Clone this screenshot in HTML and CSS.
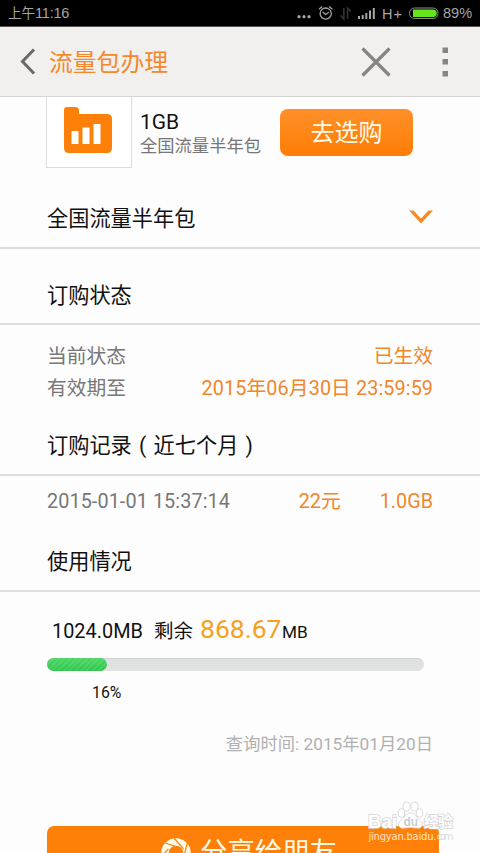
FILE: index.html
```html
<!DOCTYPE html>
<html lang="zh-CN">
<head>
<meta charset="utf-8">
<title>流量包办理</title>
<link rel="stylesheet" href="styles.css">
</head>
<body>
<div class="status">
  <span class="clock">上午<b>11:16</b></span>
  <svg class="status-icons" width="146" height="26" viewBox="296 0 146 26">
    <g fill="#a6a6a6"><circle cx="299" cy="16.7" r="1.6"/><circle cx="304" cy="16.7" r="1.6"/><circle cx="309" cy="16.7" r="1.6"/></g>
    <g fill="none" stroke="#a6a6a6" stroke-width="1.3"><circle cx="325.7" cy="13.6" r="5.6"/><path d="M322.6 12l3 2.5 3.3-2.3M319 9.2l3.2-2.6M332.4 9.2l-3.2-2.6"/></g>
    <path d="M343.8 8v11l-3.2-3.6M347.6 19V8l3.2 3.6" fill="none" stroke="#333" stroke-width="1.6"/>
    <path d="M358 16h2v3h-2zM361.7 15h2v4h-2zM365.3 13h2v6h-2zM369 10.5h2v8.500h-2zM372.800 8h2v11h-2z" fill="#a6a6a6"/>
    <text x="382" y="18.500" class="net" textLength="20">H+</text>
    <rect x="409.500" y="8" width="28.500" height="10.500" rx="5" fill="none" stroke="#8c8c8c"/>
    <path d="M413 9.500h20a3.700 3.700 0 0 1 0 7.500h-20z" fill="#63e61e"/>
  </svg>
  <span class="percent">89%</span>
</div>
<header class="header">
  <svg width="16" height="28" viewBox="0 0 16 28"><path d="M14 1.500L2.500 13.500 14 25.500" fill="none" stroke="#696969" stroke-width="3"/></svg>
  <h1>流量包办理</h1>
  <svg class="close" width="30" height="30" viewBox="0 0 30 30"><path d="M1.500 1.500l27 27M28.500 1.500l-27 27" stroke="#858585" stroke-width="3.200"/></svg>
  <svg width="6" height="30" viewBox="0 0 6 30"><path d="M.5 .5H6V6H.5zM.5 12H6v5.500H.5zM.5 24H6v5.500H.5z" fill="#858585"/></svg>
</header>
<main>
  <section class="product">
    <div class="thumb">
      <svg width="50" height="47" viewBox="0 0 50 47">
        <path d="M4 0h8q4 0 4 4v3h28q5 0 5 5v29q0 5-5 5H6q-5 0-5-5V3q0-3 3-3z" fill="#ff8008"/>
        <path d="M8.500 24h7v13h-7zM19.500 20.500h7V37h-7zM30.500 17h7v20h-7z" fill="#fff"/>
      </svg>
    </div>
    <div class="plan"><div class="size">1GB</div><div class="name">全国流量半年包</div></div>
    <div class="buy">去选购</div>
  </section>
  <h2 class="toggle"><span>全国流量半年包</span><svg width="24" height="14" viewBox="0 0 24 14"><path d="M0 .5h4.500L12 8.500l7.500-8H24L12 13.500z" fill="#f68b25"/></svg></h2>
  <h2 class="state">订购状态</h2>
  <div class="details">
    <div class="row"><span>当前状态</span><span class="hot">已生效</span></div>
    <div class="row"><span>有效期至</span><span class="hot expiry">2015年06月30日 23:59:59</span></div>
  </div>
  <h2 class="history">订购记录<i>(</i>近七个月<i>)</i></h2>
  <div class="record"><span class="when">2015-01-01 15:37:14</span><span class="hot price">22元</span><span class="hot">1.0GB</span></div>
  <h2 class="usage">使用情况</h2>
  <div class="amount"><span class="total">1024.0MB</span><span class="left">剩余</span><span class="remain">868.67</span><span class="unit">MB</span></div>
  <div class="bar"><div class="fill" style="width:16%"></div></div>
  <div class="used">16%</div>
  <div class="query">查询时间: 2015年01月20日</div>
  <div class="share">
    <svg width="30" height="30" viewBox="0 0 30 30"><circle cx="15" cy="15" r="11" fill="none" stroke="#fffbe8" stroke-width="7.500"/><path d="M15 8.500L4 5M22.500 11L13 0M23 18l3.500-14M7.500 11L0 19M8 20l4 9" stroke="#ff8008" stroke-width="1.200"/></svg>
    <span>分享给朋友</span>
  </div>
</main>
<svg class="watermark" width="90" height="46" viewBox="366 798 90 46">
  <text x="368" y="828" textLength="29" lengthAdjust="spacingAndGlyphs" class="brand">Bai</text>
  <text x="424" y="827" textLength="29" class="cn">经验</text>
  <g fill="#fff" stroke="#dadada" stroke-width="1"><ellipse cx="401.500" cy="813" rx="3.300" ry="4.200"/><ellipse cx="406.500" cy="806.500" rx="3.500" ry="4.500"/><ellipse cx="414.500" cy="806.500" rx="3.500" ry="4.500"/><ellipse cx="419.500" cy="813" rx="3.300" ry="4.200"/><path d="M410.500 813c5 0 6 5 10 8 4 4 1 8-4 7q-6-1-12 0c-6 1-8-4-4-7 4-3 5-8 10-8z"/></g>
  <text x="403.500" y="826" class="du">du</text>
  <text x="368.500" y="839.500" class="site" textLength="68">jingyan.baidu.</text>
  <text x="437" y="839.500" class="site tail" textLength="16.500">com</text>
</svg>
</body>
</html>
```
FILE: styles.css
```css
* { box-sizing: border-box; }
body {
  margin: 0;
  height: 853px;
  overflow: hidden;
  position: relative;
  background: #fdfdfd;
  color: #111;
  font-family: Roboto, "Noto Sans CJK SC", sans-serif;
}
h1, h2 { margin: 0; font-weight: 400; }
svg { display: block; flex: none; }
.status { height: 27px; background: #000; border-bottom: 1px solid #555; display: flex; color: #a6a6a6; line-height: 26px; white-space: nowrap; }
.clock { width: 288px; padding: 0 0 0 8px; font-size: 13.5px; }
.clock b { font: 14.5px "Liberation Sans", sans-serif; letter-spacing: -.2px; }
.status-icons { margin-left: 8px; }
.net { font: 14.5px "Liberation Sans", sans-serif; fill: #a6a6a6; }
.percent { margin-left: 1px; font: 14.5px/27px "Liberation Sans", sans-serif; }
.header { height: 70px; padding: 0 32px 0 20px; background: #f1f0ee; border-bottom: 1px solid #d6d6d6; display: flex; align-items: center; }
.header h1 { margin-left: 13px; padding-top: 3px; font-size: 23.8px; line-height: 67px; color: #f5882a; flex: 1; }
.close { margin-right: 51px; }
.product { height: 71px; padding-left: 46px; display: flex; }
.thumb { width: 86px; height: 71px; border: 1px solid #ddd; border-top: 0; padding: 10px 0 0 16px; background: #fff; }
.plan { width: 148px; padding-left: 8px; white-space: nowrap; }
.size { height: 37px; padding-top: 10px; font-size: 21px; line-height: 30px; }
.name { font-size: 17.3px; line-height: 24px; color: #777; }
.buy { width: 133px; height: 47px; margin-top: 12px; padding-top: 1px; border-radius: 8px; background: linear-gradient(#ff9029, #ff7d05); color: #fffbe8; font-size: 24px; line-height: 47px; text-align: center; }
h2 { padding: 0 47px; font-size: 21.2px; line-height: 30px; border-bottom: 2px solid #dedede; }
.toggle { height: 81px; padding-top: 36px; display: flex; justify-content: space-between; }
.toggle svg { margin-top: 6px; }
.state { height: 76px; padding-top: 32px; }
.details { height: 75px; padding: 16px 47px 0; }
.row { display: flex; justify-content: space-between; height: 32px; line-height: 32px; font-size: 19.8px; color: #777; }
.hot { color: #f1862b; }
.expiry { letter-spacing: .1px; margin-right: -.1px; }
.history { height: 76px; padding-top: 31px; }
.history i { display: inline-block; width: 21.8px; text-align: center; font-style: normal; }
.record { height: 60px; padding: 0 47px; display: flex; line-height: 51px; font-size: 19.8px; color: #777; }
.when { flex: 1; letter-spacing: .1px; }
.price { width: 81px; }
.usage { height: 56px; padding-top: 11px; }
.amount { height: 65px; padding: 17px 0 0 52px; display: flex; align-items: baseline; white-space: nowrap; line-height: 40px; }
.total { width: 102px; font-size: 19.9px; }
.left { width: 46px; font-size: 19.5px; }
.remain { width: 82px; font-size: 26.5px; color: #f7a020; }
.unit { font-size: 17.2px; }
.bar { width: 377px; height: 13px; margin: 1px 0 0 47px; border-radius: 7px; background: #e0e2e1; border-top: 1px solid #cfd1d0; }
.fill { height: 13px; margin-top: -1px; border-radius: 7px; background: repeating-linear-gradient(135deg, #ffffff18 0 2px, transparent 2px 4px), linear-gradient(#4bd664, #2fc54b); }
.used { height: 57px; padding: 12px 0 0 92px; font-size: 15.8px; line-height: 20px; }
.query { height: 98px; padding-right: 47px; text-align: right; color: #b0b0b0; font-size: 17.3px; line-height: 32px; }
.share { width: 392px; height: 60px; margin-left: 47px; border-radius: 7px; background: #ff8008; display: flex; padding: 12px 0 0 114px; color: #fffbe8; font-size: 27.4px; line-height: 28px; }
.share span { margin-left: 9px; padding-top: 1px; white-space: nowrap; }
.watermark { position: absolute; left: 366px; top: 798px; }
.brand { font: bold 19px "Liberation Sans", sans-serif; fill: #fff; stroke: #d5d5d5; stroke-width: 1.6px; paint-order: stroke; }
.cn { font: bold 15px "Noto Sans CJK SC", sans-serif; fill: #fff; stroke: #d5d5d5; stroke-width: 1.4px; paint-order: stroke; }
.du { font: bold 12px "Liberation Sans", sans-serif; fill: #ccc; }
.site { font: 10px "DejaVu Sans", sans-serif; fill: #ffe3c8; }
.tail { fill: #dcdcdc; }
```
